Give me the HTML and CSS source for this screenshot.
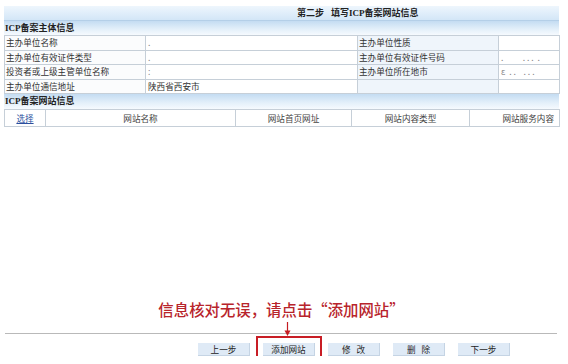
FILE: index.html
```html
<!DOCTYPE html>
<html lang="zh-CN">
<head>
    <meta charset="UTF-8">
    <title>第二步 填写ICP备案网站信息</title>
    <link rel="stylesheet" href="styles.css">
</head>
<body>
    <div class="page">
        <div class="title-bar"><span class="step">第二步</span>填写ICP备案网站信息</div>

        <div class="section-bar">ICP备案主体信息</div>
        <table class="info">
            <colgroup>
                <col class="c-label"><col class="c-value"><col class="c-label2"><col class="c-value2">
            </colgroup>
            <tr>
                <td class="label">主办单位名称</td>
                <td class="value"><span class="dot">.</span></td>
                <td class="label alt">主办单位性质</td>
                <td class="value"></td>
            </tr>
            <tr>
                <td class="label">主办单位有效证件类型</td>
                <td class="value"><span class="dot">.</span></td>
                <td class="label alt">主办单位有效证件号码</td>
                <td class="value"><span class="dot">.&nbsp;&nbsp;&nbsp;&nbsp;&nbsp;&nbsp;&nbsp;&nbsp;&nbsp;&nbsp;. . .&nbsp;&nbsp;.</span></td>
            </tr>
            <tr>
                <td class="label">投资者或上级主管单位名称</td>
                <td class="value"><span class="dot">:</span></td>
                <td class="label alt">主办单位所在地市</td>
                <td class="value"><span class="dot">ε&nbsp;&nbsp;. .&nbsp;&nbsp;&nbsp;&nbsp;. . .</span></td>
            </tr>
            <tr>
                <td class="label">主办单位通信地址</td>
                <td class="value">陕西省西安市</td>
                <td class="label alt"></td>
                <td class="value"></td>
            </tr>
        </table>

        <div class="section-bar second">ICP备案网站信息</div>
        <table class="sites">
            <colgroup>
                <col class="s-pick"><col class="s-name"><col class="s-url"><col class="s-type"><col class="s-service">
            </colgroup>
            <tr>
                <td><a href="#" class="pick">选择</a></td>
                <td>网站名称</td>
                <td>网站首页网址</td>
                <td>网站内容类型</td>
                <td class="last">网站服务内容</td>
            </tr>
        </table>

        <div class="notice">信息核对无误，请点击“添加网站”</div>

        <div class="footer">
            <svg class="arrow" width="7" height="14" viewBox="0 0 7 14">
                <line x1="3.5" y1="0" x2="3.5" y2="11" stroke="#c41c22" stroke-width="1.2"/>
                <polygon points="0.5,8.5 6.5,8.5 3.5,14" fill="#c41c22"/>
            </svg>
            <div class="rule"></div>
            <div class="buttons">
                <button class="btn">上一步</button>
                <button class="btn highlight">添加网站</button>
                <button class="btn">修&nbsp;&nbsp;&nbsp;改</button>
                <button class="btn">删&nbsp;&nbsp;&nbsp;除</button>
                <button class="btn">下一步</button>
            </div>
        </div>
    </div>
</body>
</html>
```

FILE: styles.css
```css
body {
    margin: 0;
    background: #fff;
    font-family: "Noto Sans CJK SC", "Liberation Sans", sans-serif;
    font-size: 8.6px;
    color: #333;
}
.page {
    width: 555px;
    padding: 6px 0 0 4px;
}
.title-bar {
    height: 14px;
    line-height: 14px;
    padding-left: 293px;
    background: linear-gradient(#eef6fd, #d3e6f7);
    border-bottom: 1px solid #b4cfe8;
    font-family: "Liberation Serif", "Noto Sans CJK SC", serif;
    font-size: 9px;
    font-weight: bold;
    color: #222;
}
.step {
    margin-right: 7px;
}
.section-bar {
    height: 14px;
    line-height: 15px;
    padding-left: 1px;
    background: linear-gradient(#c4dcf2, #e4f0fa 60%, #f6fafe);
    font-family: "Liberation Serif", "Noto Sans CJK SC", serif;
    font-size: 9px;
    font-weight: bold;
    color: #222;
}
.section-bar.second {
    height: 15px;
}
table {
    width: 555px;
    border-collapse: collapse;
    table-layout: fixed;
}
td {
    border: 1px solid #c6cfd8;
    padding: 0;
    white-space: nowrap;
    overflow: hidden;
}
.c-label { width: 141px; }
.c-value { width: 212px; }
.c-label2 { width: 141px; }
.c-value2 { width: 61px; }
.info td {
    height: 13.5px;
    line-height: 13px;
}
.info .label {
    padding-left: 1px;
    background: #fbfcfd;
}
.info .label.alt {
    background: #eff5fb;
}
.info .value {
    padding-left: 2px;
}
.dot {
    color: #888;
}
.s-pick { width: 41px; }
.s-name { width: 190px; }
.s-url { width: 116px; }
.s-type { width: 118px; }
.s-service { width: 90px; }
.sites td {
    height: 16px;
    line-height: 16px;
    text-align: center;
    color: #444;
}
.sites td.last {
    text-align: right;
    padding-right: 5px;
}
.pick {
    color: #2b4f9e;
    text-decoration: underline;
}
.notice {
    margin-top: 173px;
    height: 19px;
    line-height: 19px;
    text-align: center;
    font-size: 15.4px;
    font-weight: 500;
    color: #b8242b;
}
.footer {
    position: relative;
    padding-top: 14px;
}
.arrow {
    position: absolute;
    left: 280px;
    top: 3px;
}
.rule {
    margin: 0 2px 0 1px;
    border-top: 1px solid #b9b9b9;
}
.buttons {
    display: flex;
    gap: 13px;
    padding: 9px 0 0 194px;
}
.btn {
    position: relative;
    width: 52px;
    height: 13px;
    padding: 0;
    border: none;
    border-right: 1px solid #c5d4e4;
    border-bottom: 1px solid #c5d4e4;
    background: #dfeaf6;
    font-family: "Noto Sans CJK SC", sans-serif;
    font-size: 8.6px;
    line-height: 12px;
    color: #222;
}
.btn.highlight::after {
    content: "";
    position: absolute;
    left: -7px;
    top: -7px;
    width: 62px;
    height: 20px;
    border: 2px solid #c81d25;
}
```
